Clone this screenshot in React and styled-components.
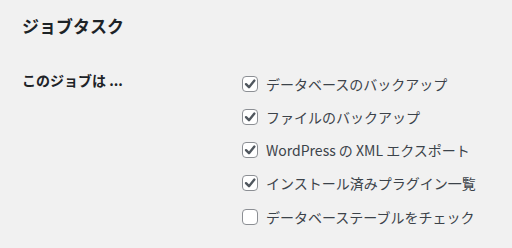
import styled, { createGlobalStyle } from "styled-components";

const GlobalStyle = createGlobalStyle`
  html, body {
    margin: 0;
    padding: 0;
    background: #f1f1f1;
  }
  body {
    font-family: "Noto Sans CJK JP", "Noto Sans", sans-serif;
    color: #3c434a;
  }
`;

const Page = styled.div`
  width: 512px;
  height: 248px;
  padding: 0 22px;
  box-sizing: border-box;
  overflow: hidden;
`;

const Title = styled.h2`
  margin: 13px 0 0;
  font-size: 17px;
  line-height: 26px;
  font-weight: 700;
  color: #1d2327;
`;

const FormRow = styled.div`
  display: flex;
  margin-top: 28px;
`;

const Label = styled.div`
  width: 220px;
  flex: none;
  padding-top: 3px;
  font-size: 14px;
  line-height: 20px;
  font-weight: 700;
  color: #1d2327;
`;

const List = styled.div`
  display: flex;
  flex-direction: column;
`;

const Option = styled.label`
  display: flex;
  align-items: center;
  gap: 8px;
  height: 33.25px;
  font-size: 14px;
  color: #3c434a;
`;

const Box = styled.span`
  width: 16px;
  height: 16px;
  box-sizing: border-box;
  border: 1px solid #8c8f94;
  border-radius: 4px;
  background: #fff;
  display: flex;
  align-items: center;
  justify-content: center;
`;

const Check = () => (
  <svg width="14" height="14" viewBox="0 0 14 14">
    <path d="M3 7.2 L6 10.2 L11.4 3.6" fill="none" stroke="#50575e" strokeWidth="2.4" strokeLinecap="round" strokeLinejoin="round" />
  </svg>
);

const options = [
  { text: "データベースのバックアップ", checked: true },
  { text: "ファイルのバックアップ", checked: true },
  { text: "WordPress の XML エクスポート", checked: true },
  { text: "インストール済みプラグイン一覧", checked: true },
  { text: "データベーステーブルをチェック", checked: false },
];

export default function App() {
  return (
    <Page>
      <GlobalStyle />
      <Title>ジョブタスク</Title>
      <FormRow>
        <Label>このジョブは ...</Label>
        <List>
          {options.map((o) => (
            <Option key={o.text}>
              <Box>{o.checked && <Check />}</Box>
              {o.text}
            </Option>
          ))}
        </List>
      </FormRow>
    </Page>
  );
}
